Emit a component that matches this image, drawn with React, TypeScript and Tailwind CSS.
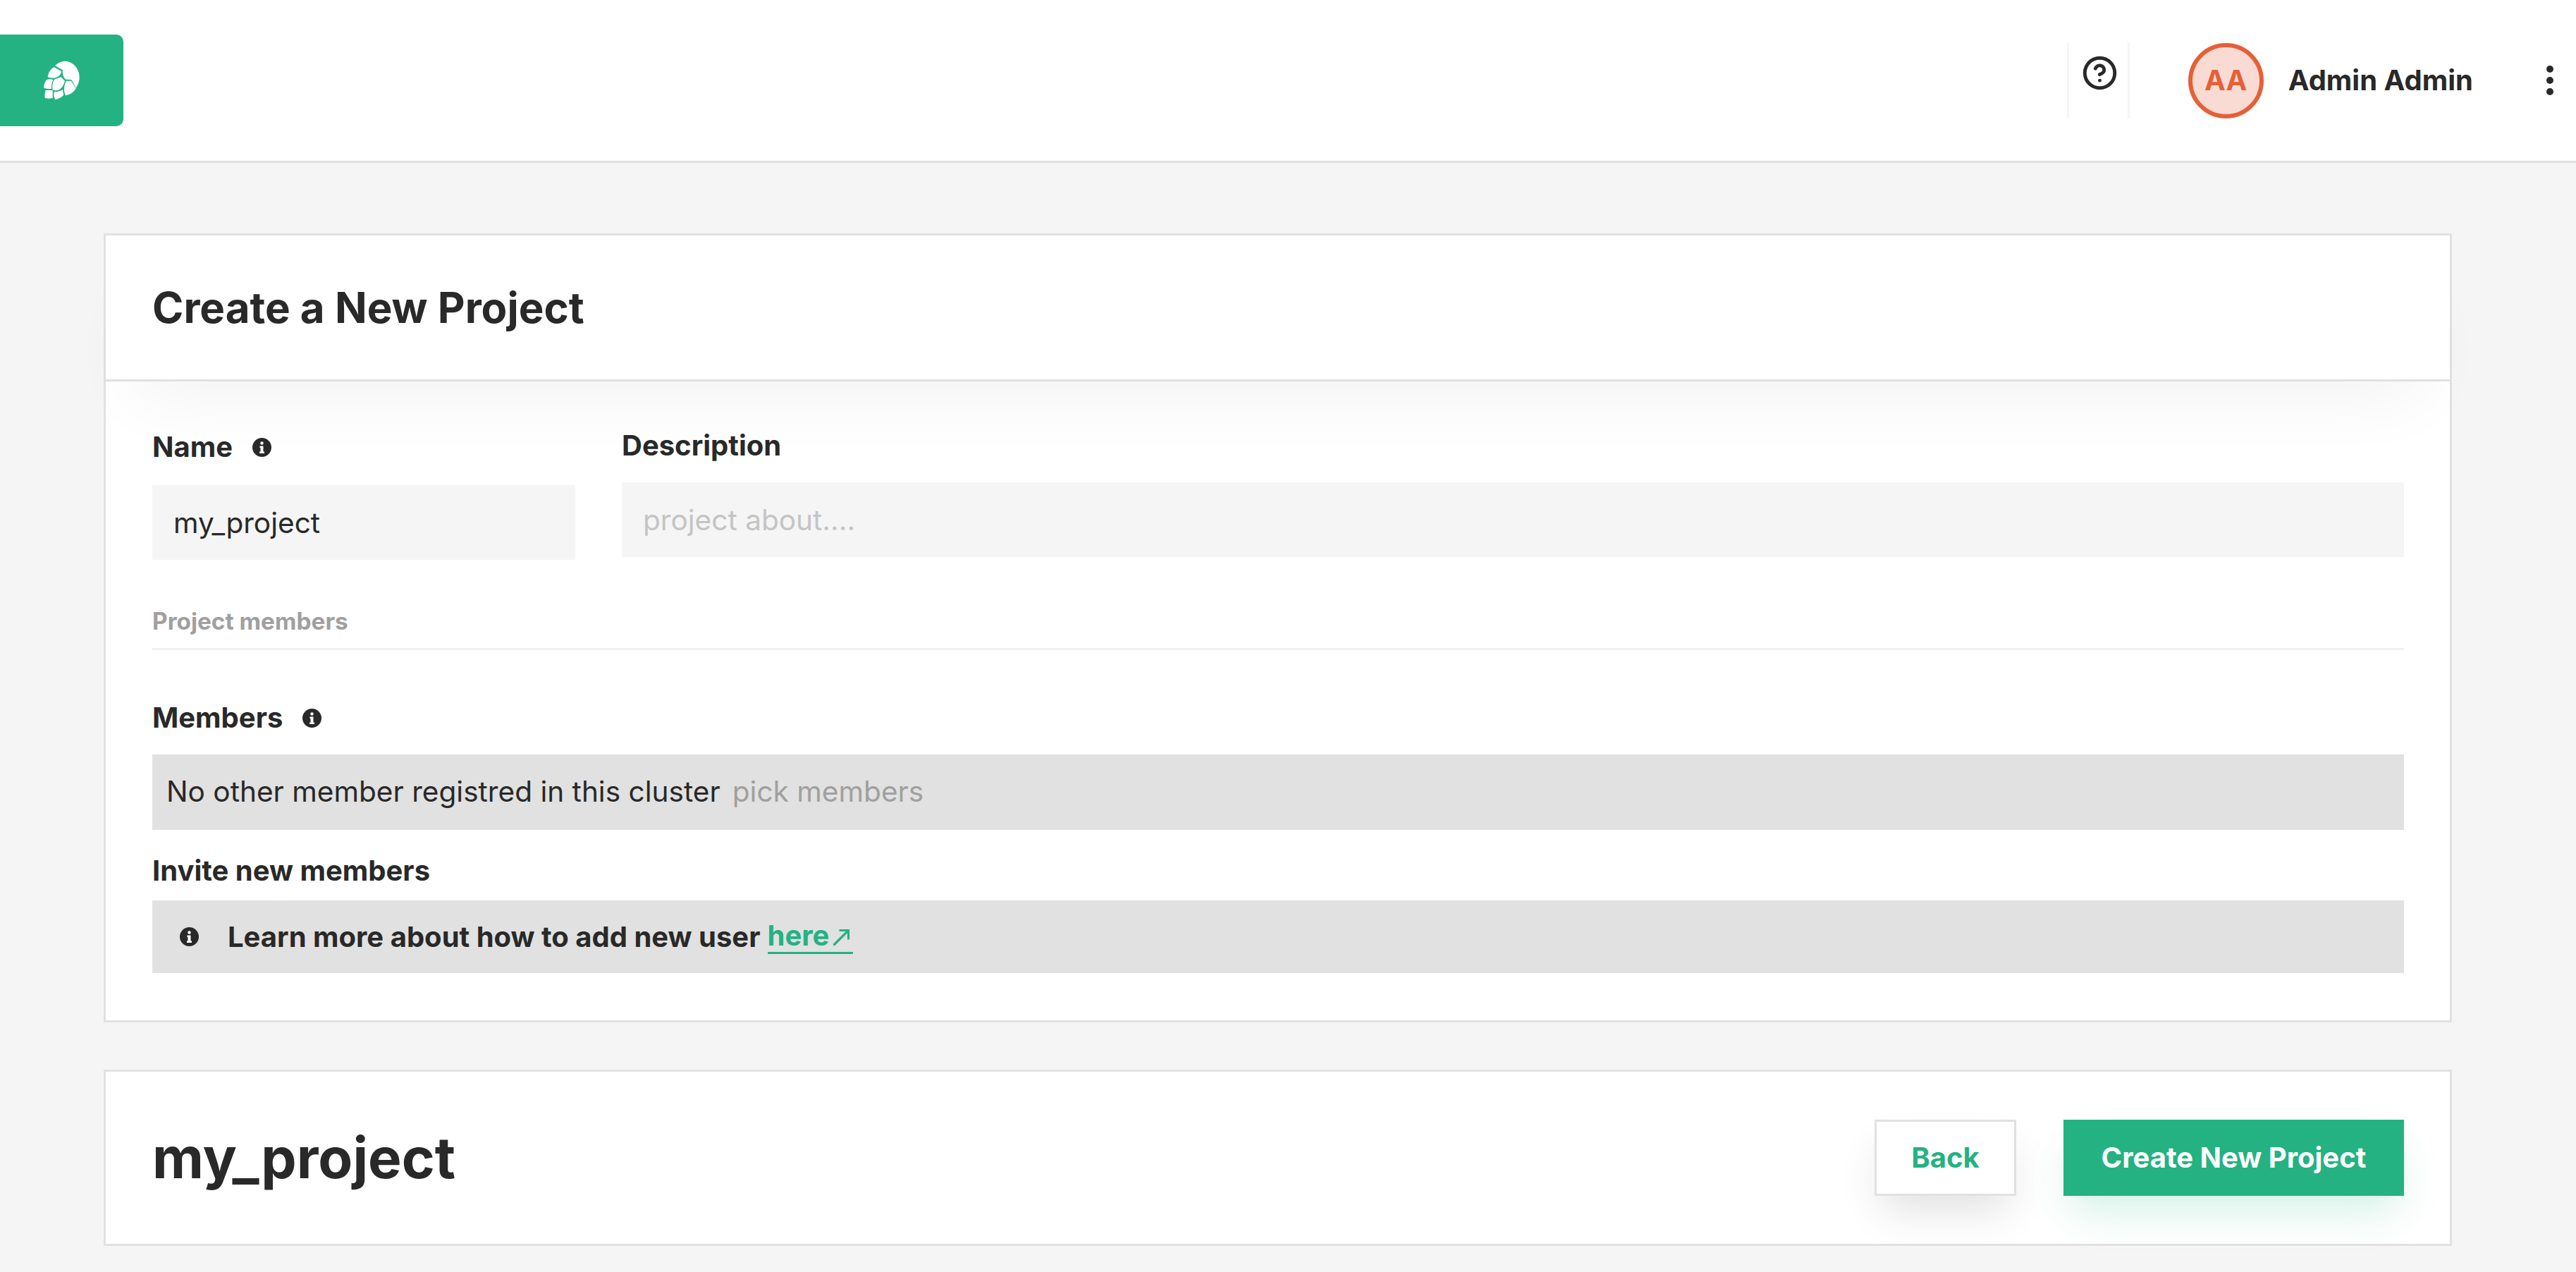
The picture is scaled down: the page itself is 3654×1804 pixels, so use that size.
import { CircleHelp } from "lucide-react";

const InfoIcon = () => (
  <svg width="27" height="27" viewBox="0 0 27 27" className="shrink-0">
    <circle cx="13.5" cy="13.5" r="13.5" fill="#292929" />
    <circle cx="13.5" cy="7.5" r="2.2" fill="#fff" />
    <path d="M10.5 11.5h5v8h1.5v2.5h-7v-2.5h1.5v-5.5h-1z" fill="#fff" />
  </svg>
);

const HopLogo = () => (
  <svg width="53" height="58" viewBox="182 265 154 165" fill="#fff">
    <path d="M232 287C245 272 270 265 285 270C315 278 335 310 332 340C331 355 325 368 318 378L300 345L275 343C265 335 262 320 263 305Z" />
    <path d="M228 293L257 310C258 320 250 330 238 335C225 340 212 338 201 333C204 315 215 298 228 293Z" />
    <path d="M197 345C205 342 215 342 224 345C218 355 216 370 217 382C207 384 195 382 185 378C185 365 190 352 197 345Z" />
    <path d="M256 333L272 350C268 365 262 378 250 385C240 390 230 390 222 387C219 370 222 350 232 342C240 340 250 337 256 333Z" />
    <path d="M278 350L298 350L318 380C310 395 295 405 275 410C268 395 265 375 278 350Z" />
    <path d="M192 389C200 388 212 388 222 389C222 400 222 410 222 420C212 423 200 423 190 420C188 410 190 398 192 389Z" />
    <path d="M228 395C240 395 255 392 263 385L267 408C258 418 245 425 232 427C226 415 226 405 228 395Z" />
  </svg>
);

const ExternalArrow = () => (
  <svg width="24" height="26" viewBox="0 0 24 26" fill="none" stroke="#24b283" strokeWidth="3.2" className="ml-[5px] mr-[5px] mt-[6px]">
    <path d="M1.5 23.5L22 3" />
    <path d="M9.5 2.5H22.5V15.5" />
  </svg>
);

export default function App() {
  return (
    <div className="h-[1804px] overflow-hidden bg-[#f5f5f5] font-['Inter',sans-serif] text-[#292929]">
      {/* top bar */}
      <header className="flex h-[231px] items-center border-b-[3px] border-[#e1e1e1] bg-white">
        <div className="flex h-[130px] w-[175px] items-center justify-center rounded-r-[10px] bg-[#24b283]">
          <HopLogo />
        </div>
        <div className="ml-auto flex items-center">
          <div className="flex h-[107px] w-[89px] justify-center border-x-[3px] border-[#f5f5f5] pl-[4px] pt-[17px]">
            <CircleHelp size={51} strokeWidth={2.3} color="#292929" />
          </div>
          <div className="ml-[83px] flex h-[107px] w-[107px] items-center justify-center rounded-full border-[6px] border-[#e66037] bg-[#f9dbd3] text-[40px] font-bold text-[#e66037]">
            AA
          </div>
          <span className="ml-[35px] text-[40px] font-bold">Admin Admin</span>
          <div className="ml-[104px] mr-[32px] flex flex-col gap-[6px]">
            <span className="h-[10px] w-[10px] rounded-full bg-[#292929]" />
            <span className="h-[10px] w-[10px] rounded-full bg-[#292929]" />
            <span className="h-[10px] w-[10px] rounded-full bg-[#292929]" />
          </div>
        </div>
      </header>

      <main className="ml-[147px] mr-[176px] flex flex-col gap-[67px] pt-[100px]">
        {/* form card */}
        <section className="h-[1119px] border-[3px] border-[#e1e1e1] bg-white">
          <div className="flex h-[207px] items-center border-b-[3px] border-[#e1e1e1] pl-[66px] shadow-[0_60px_100px_-40px_rgba(0,0,0,0.055)]">
            <h1 className="text-[60px] font-bold">Create a New Project</h1>
          </div>
          <div className="pl-[66px] pr-[65px]">
            <div className="flex items-start gap-[66px]">
              <div className="w-[600px] shrink-0 pt-[69px]">
                <div className="flex h-[48px] items-center gap-[28px] text-[40px] font-bold">
                  Name
                  <InfoIcon />
                </div>
                <input
                  readOnly
                  value="my_project"
                  className="mt-[30px] h-[106px] w-full bg-[#f5f5f5] px-[30px] text-[40.6px] outline-none"
                />
              </div>
              <div className="flex-1 pt-[67px]">
                <div className="flex h-[48px] items-center text-[40px] font-bold">Description</div>
                <input
                  readOnly
                  placeholder="project about...."
                  className="mt-[28px] h-[106px] w-full bg-[#f5f5f5] px-[30px] text-[40.6px] outline-none placeholder:text-[#c4c4c4]"
                />
              </div>
            </div>

            <div className="mt-[67px] border-b-[3px] border-[#f0f0f0] pb-[18px] text-[33.4px] font-bold leading-[40px] text-[#a0a0a0]">
              Project members
            </div>

            <div className="mt-[72px] flex h-[48px] items-center gap-[28px] text-[40px] font-bold">
              Members
              <InfoIcon />
            </div>
            <div className="mt-[28px] flex h-[107px] items-center gap-[17px] bg-[#e1e1e1] px-[20px] text-[40.6px]">
              <span>No other member registred in this cluster</span>
              <span className="text-[#a0a0a0]">pick members</span>
            </div>

            <div className="mt-[34px] text-[40px] font-bold leading-[48px]">Invite new members</div>
            <div className="mt-[18px] flex h-[103px] items-center bg-[#e1e1e1] pl-[39px] text-[40px] font-bold">
              <InfoIcon />
              <span className="ml-[41px]">Learn more about how to add new user</span>
              <a className="ml-[10px] flex items-center border-b-[3px] border-[#24b283] leading-[46px] text-[#24b283]">
                here
                <ExternalArrow />
              </a>
            </div>
          </div>
        </section>

        {/* footer card */}
        <section className="flex h-[250px] items-center border-[3px] border-[#e1e1e1] bg-white pl-[66px] pr-[65px]">
          <h2 className="text-[80px] font-bold">my_project</h2>
          <div className="ml-auto flex gap-[67px]">
            <button className="h-[108px] w-[201px] border-[3px] border-[#e1e1e1] bg-white text-[40px] font-bold text-[#24b283] shadow-[0_30px_60px_-10px_rgba(0,0,0,0.12)]">
              Back
            </button>
            <button className="h-[108px] w-[483px] bg-[#24b283] text-[40px] font-bold text-white shadow-[0_30px_60px_-10px_rgba(36,178,131,0.2)]">
              Create New Project
            </button>
          </div>
        </section>
      </main>
    </div>
  );
}
